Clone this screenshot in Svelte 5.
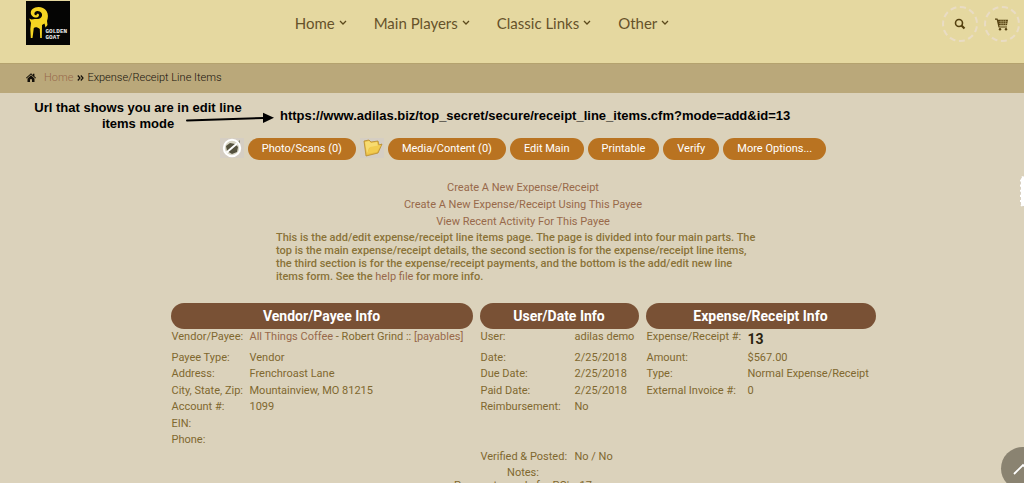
<script>
  const menus = ['Home', 'Main Players', 'Classic Links', 'Other'];
  const actions = ['Edit Main', 'Printable', 'Verify', 'More Options...'];
  const links = [
    'Create A New Expense/Receipt',
    'Create A New Expense/Receipt Using This Payee',
    'View Recent Activity For This Payee'
  ];
  const rows = [
    ['Payee Type:', 'Vendor', 'Date:', '2/25/2018', 'Amount:', '$567.00'],
    ['Address:', 'Frenchroast Lane', 'Due Date:', '2/25/2018', 'Type:', 'Normal Expense/Receipt'],
    ['City, State, Zip:', 'Mountainview, MO 81215', 'Paid Date:', '2/25/2018', 'External Invoice #:', '0'],
    ['Account #:', '1099', 'Reimbursement:', 'No', '', ''],
    ['EIN:', '', '', '', '', ''],
    ['Phone:', '', '', '', '', ''],
    ['', '', 'Verified & Posted:', 'No / No', '', '']
  ];
</script>

<div class="page">
  <header>
    <a class="logo" href="#top" aria-label="Golden Goat">
      <svg viewBox="0 0 44 44" width="44" height="44">
        <rect width="44" height="44" fill="#050504" />
        <path d="M9 16.5C4.500 15.500 3.500 10.500 6.500 8C10 4.800 17.500 5.200 20.500 10C22.500 13.200 22.200 17 21 20L21.500 24L19.500 26.500L18.500 22.500L16 24L15.800 37H14.200L13.800 28C11.500 26 9 26 7.800 27L6.500 37H4.800L4.300 28L5 22L3.200 17.500L5.500 18.500C7.500 17.500 10 18 12 18C15.500 17.500 17 14.500 15.500 12C14 9.500 10 9.300 8.700 11.500C7.700 13.300 9 14.800 10.500 14.200C10.500 12.500 12.800 12.200 13 14C13.200 15.700 11.200 17 9 16.500Z" fill="#f5d522" />
        <text x="19.500" y="31.500">GOLDEN</text>
        <text x="19.500" y="37.500">GOAT</text>
      </svg>
    </a>
    <nav>
      {#each menus as m}
        <a href="#menu">{m}<svg viewBox="0 0 8 6" width="8" height="6"><path d="M1 1l3 3 3-3" fill="none" stroke="#5c4a1c" stroke-width="1.300" /></svg></a>
      {/each}
    </nav>
    <div class="tools">
      <button aria-label="Search">
        <svg viewBox="0 0 12 12" width="12" height="12" fill="none" stroke="#54400f"><circle cx="5" cy="5" r="3.500" stroke-width="1.600" /><path d="M7.500 7.500l3 3" stroke-width="2.200" /></svg>
      </button>
      <button aria-label="Cart">
        <svg viewBox="0 0 14 13" width="14" height="13"><path d="M0 .5h2.500l.4 1.300H13L12 7.200H4.200l.3 1.200H12v1.200H3.500L1.700 1.700H0z" fill="#54400f" /><path d="M3.500 3.700h9M4 5.500h8.500M6 2v5M8.200 2v5M10.400 2v5" stroke="#e5d8a0" stroke-width=".4" /><circle cx="5" cy="11.300" r="1.200" fill="#54400f" /><circle cx="11" cy="11.300" r="1.200" fill="#54400f" /></svg>
      </button>
    </div>
  </header>

  <div class="crumbs">
    <svg viewBox="0 0 10 9" width="10" height="9" fill="#15110a"><path d="M5 .2L7 2V.8h1.400v2.400L10 4.800l-.6.600L5 1.500.6 5.400 0 4.800z" /><path d="M5 2.300L8.500 5.400V9H6V6.200H4V9H1.500V5.400z" /></svg>
    <a href="#home">Home</a>
    <svg viewBox="0 0 7 6" width="7" height="6" fill="none" stroke="#15110a" stroke-width="1.200"><path d="M.8.500L3 3 .8 5.500M3.800.500L6 3 3.800 5.500" /></svg>
    <span>Expense/Receipt Line Items</span>
  </div>

  <div class="callout">
    <p>Url that shows you are in edit line items mode</p>
    <svg viewBox="0 0 88 12" width="88" height="12"><path d="M1 8.500L78 6" stroke="#000" stroke-width="2" stroke-linecap="round" /><path d="M77 .800L88 5.700L77 11z" /></svg>
    <strong>https://www.adilas.biz/top_secret/secure/receipt_line_items.cfm?mode=add&amp;id=13</strong>
  </div>

  <main>
    <div class="actions">
      <svg viewBox="0 0 24 20" width="24" height="20"><rect width="24" height="20" fill="#d5cec3" /><path d="M5 5h11l4-3v13H5z" fill="#8f8b78" /><circle cx="12" cy="10" r="8.200" fill="#d8d5c5" stroke="#fff" stroke-width="2" /><path d="M6 8l4-3 5 1 3 3-1 5-5 2-5-3z" fill="#55523f" /><path d="M6.500 14.500L17 5.500" stroke="#fff" stroke-width="2" /></svg>
      <button>Photo/Scans (0)</button>
      <svg viewBox="0 0 24 20" width="24" height="20"><rect width="24" height="20" fill="#d5cec3" /><path d="M4 3l5-1 2 2 7-1 1 4 3-1-4 9-12 3z" fill="#e8bd45" stroke="#b88b2d" stroke-width=".8" /><path d="M5 4l4-1 2 2 6-1 1 4-9 2-2 6z" fill="#f7db71" /><path d="M7 16l3-7 11-2-4 7z" fill="#f2cc50" /></svg>
      <button>Media/Content (0)</button>
      {#each actions as a}<button>{a}</button>{/each}
    </div>

    <ul>
      {#each links as l}<li><a href="#link">{l}</a></li>{/each}
    </ul>
    <p class="intro">
      This is the add/edit expense/receipt line items page. The page is divided into four main parts. The<br />
      top is the main expense/receipt details, the second section is for the expense/receipt line items,<br />
      the third section is for the expense/receipt payments, and the bottom is the add/edit new line<br />
      items form. See the <a href="#help">help file</a> for more info.
    </p>

    <table>
      <colgroup>
        <col style:width="78px" /><col style:width="224px" />
        <col style:width="101px" /><col style:width="65px" />
        <col style:width="108px" /><col style:width="129px" />
      </colgroup>
      <thead>
        <tr>
          <th colspan="2"><span>Vendor/Payee Info</span></th>
          <th colspan="2"><span>User/Date Info</span></th>
          <th colspan="2"><span>Expense/Receipt Info</span></th>
        </tr>
      </thead>
      <tbody>
        <tr class="first">
          <td>Vendor/Payee:</td>
          <td><a href="#payee">All Things Coffee</a> - Robert Grind :: <a href="#payables">[payables]</a></td>
          <td>User:</td>
          <td>adilas demo</td>
          <td>Expense/Receipt #:</td>
          <td><b>13</b></td>
        </tr>
        {#each rows as row}
          <tr>{#each row as cell}<td>{cell}</td>{/each}</tr>
        {/each}
        <tr><td class="note" colspan="6">Notes:<br />Payments made for PO's: 17</td></tr>
      </tbody>
    </table>
  </main>

  <div class="tab"></div>
  <a class="up" href="#top" aria-label="Back to top"><svg viewBox="0 0 20 12" width="20" height="12"><path d="M1 11L10 2l9 9" fill="none" stroke="#fff" stroke-width="1.800" /></svg></a>
</div>

<style>
  :global(body) { background: #dbd2bb; }
  .page {
    position: relative;
    height: 100vh;
    overflow: hidden;
    font: 11px/16px Roboto, sans-serif;
    color: #80682f;
  }
  a { color: #98694a; text-decoration: none; }
  button { border: 0; padding: 0; font: inherit; cursor: pointer; }
  header {
    display: grid;
    grid-template-columns: 1fr auto 1fr;
    height: 63px;
    box-sizing: border-box;
    padding: 1px 4px 0 26px;
    background: #e5d8a0;
  }
  .logo { height: 44px; justify-self: start; }
  .logo text { font: bold 6px "Liberation Mono", monospace; fill: #eee; }
  nav { display: flex; gap: 27px; padding-top: 12px; margin-right: 82px; }
  nav a { display: flex; align-items: center; gap: 4px; height: 20px; font: 15px/20px Lato, sans-serif; color: #65522a; }
  .tools { display: flex; justify-content: end; gap: 6px; padding-top: 5px; }
  .tools button {
    display: grid;
    place-items: center;
    box-sizing: border-box;
    width: 36px;
    height: 36px;
    border: 2px dashed #e9dcc4;
    border-radius: 50%;
    background: none;
  }
  .crumbs {
    display: flex;
    align-items: center;
    height: 30px;
    box-sizing: border-box;
    padding: 0 26px 2px;
    border-top: 1px solid #b4a26e;
    background: #baa87a;
    font-weight: 300;
    color: #15110a;
  }
  .crumbs a { margin: 0 4px 0 8px; }
  .crumbs span { margin-left: 3px; }
  .callout {
    display: flex;
    height: 45px;
    padding-left: 33px;
    font: bold 13px/16px "Liberation Sans", Arial, sans-serif;
    color: #000;
  }
  .callout p { width: 210px; margin: 7px 0 0; text-align: center; }
  .callout svg { margin: 19px 6px 0 -57px; flex: none; }
  .callout strong { margin-top: 15px; }
  main { padding-left: 22px; }
  .actions { display: flex; justify-content: center; gap: 4px; }
  .actions button {
    height: 22px;
    padding: 0 14px;
    border-radius: 11px;
    background: #b97321;
    color: #fff;
  }
  ul { list-style: none; margin: 19px 0 0; padding: 0; text-align: center; }
  li { line-height: 17px; }
  .intro { width: 494px; margin: 1px auto 0; font-weight: 500; line-height: 13px; color: #8a7338; }
  .intro a { font-weight: 400; }
  table { margin: 20px auto 0; border-collapse: collapse; white-space: nowrap; }
  th { padding: 0 0 0 7px; }
  th:first-child { padding-left: 0; }
  th span {
    display: block;
    border-radius: 13px;
    background: #795135;
    color: #fff;
    font-size: 14px;
    line-height: 26px;
  }
  td { height: 16px; padding: 0 1px; line-height: 17px; vertical-align: top; }
  tr:nth-child(odd) td { line-height: 16px; }
  td:nth-child(3), td:nth-child(5) { padding-left: 8px; }
  .first td { height: 20px; }
  .first b { font-size: 14px; line-height: 20px; color: #2c2310; }
  tr:nth-child(odd) .note { padding-top: 1px; line-height: 13px; text-align: center; }
  .tab {
    position: absolute;
    right: -10px;
    top: 176px;
    width: 12px;
    height: 29px;
    border: 1px dashed #d8d0c0;
    border-radius: 4px;
    background: #fff;
  }
  .up {
    position: absolute;
    right: -20px;
    top: 447px;
    display: grid;
    place-items: center;
    width: 43px;
    height: 43px;
    border-radius: 50%;
    background: #8a8371;
  }
</style>
